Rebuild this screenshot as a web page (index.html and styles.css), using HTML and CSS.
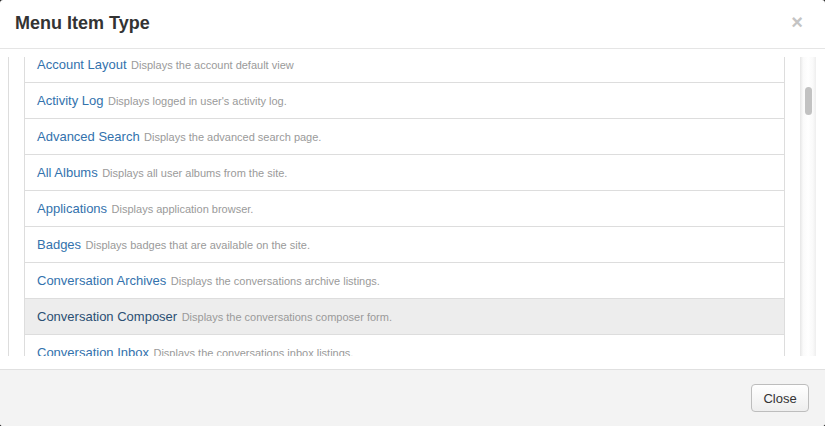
FILE: index.html
```html
<!DOCTYPE html>
<html lang="en">
<head>
  <meta charset="UTF-8">
  <title>Menu Item Type</title>
  <link rel="stylesheet" href="styles.css">
</head>
<body>
  <div class="modal">
    <div class="modal-header">
      <h3 class="modal-title">Menu Item Type</h3>
      <span class="close">&times;</span>
    </div>

    <div class="modal-body">
      <div class="scroll-box">
        <div class="scroll-content">
          <ul class="list-group">
            <li class="list-item"><a href="#">Account Layout</a> <span class="desc">Displays the account default view</span></li>
            <li class="list-item"><a href="#">Activity Log</a> <span class="desc">Displays logged in user's activity log.</span></li>
            <li class="list-item"><a href="#">Advanced Search</a> <span class="desc">Displays the advanced search page.</span></li>
            <li class="list-item"><a href="#">All Albums</a> <span class="desc">Displays all user albums from the site.</span></li>
            <li class="list-item"><a href="#">Applications</a> <span class="desc">Displays application browser.</span></li>
            <li class="list-item"><a href="#">Badges</a> <span class="desc">Displays badges that are available on the site.</span></li>
            <li class="list-item"><a href="#">Conversation Archives</a> <span class="desc">Displays the conversations archive listings.</span></li>
            <li class="list-item active"><a href="#">Conversation Composer</a> <span class="desc">Displays the conversations composer form.</span></li>
            <li class="list-item"><a href="#">Conversation Inbox</a> <span class="desc">Displays the conversations inbox listings.</span></li>
            <li class="list-item"><a href="#">Conversation Read</a> <span class="desc">Displays the conversation reading page.</span></li>
          </ul>
        </div>
        <div class="scroll-track">
          <div class="scroll-thumb"></div>
        </div>
      </div>
    </div>

    <div class="modal-footer">
      <button class="btn">Close</button>
    </div>
  </div>
</body>
</html>
```

FILE: styles.css
```css
html {
  background-color: #1a1a1a;
}

body {
  margin: 0;
  font-family: 'Liberation Sans', Arial, sans-serif;
  color: #333;
}

.modal {
  width: 825px;
  height: 426px;
  background-color: #fff;
  border-radius: 3px;
  overflow: hidden;
  display: flex;
  flex-direction: column;
}

.modal-header {
  height: 48px;
  border-bottom: 1px solid #e5e5e5;
  display: flex;
  align-items: center;
  justify-content: space-between;
  padding: 0 22px 0 15px;
}

.modal-title {
  margin: 0;
  font-size: 18px;
  font-weight: bold;
  color: #333;
  padding-bottom: 1px;
}

.close {
  font-size: 20px;
  font-weight: bold;
  color: #c4c4c4;
  line-height: 1;
  padding-bottom: 4px;
}

.modal-body {
  padding: 8px 9px 13px 8px;
}

.scroll-box {
  height: 299px;
  border-left: 1px solid #ddd;
  display: flex;
}

.scroll-content {
  flex: 1;
  overflow: hidden;
  padding: 0 15px;
}

.list-group {
  list-style: none;
  margin: -11px 0 0;
  padding: 0;
  border-top: 1px solid #ddd;
}

.list-item {
  height: 33px;
  line-height: 33px;
  padding: 0 12px 2px;
  border: 1px solid #ddd;
  border-top: none;
  white-space: nowrap;
}

.list-item a {
  font-size: 13px;
  color: #3372ad;
  text-decoration: none;
}

.list-item .desc {
  font-size: 11px;
  color: #9a9a9a;
}

.list-item.active {
  background-color: #ededed;
}

.list-item.active a {
  color: #2b4f73;
}

.scroll-track {
  width: 16px;
  background: linear-gradient(to right, #e6e6e6, #fafafa 20%, #fff 50%, #fafafa 80%, #eeeeee);
}

.scroll-thumb {
  width: 7px;
  height: 28px;
  margin: 30px 0 0 5px;
  border-radius: 4px;
  background-color: #c2c2c2;
}

.modal-footer {
  flex: 1;
  border-top: 1px solid #e0e0e0;
  background-color: #f3f3f3;
  display: flex;
  justify-content: flex-end;
  align-items: flex-start;
  padding: 14px 16px 0;
}

.btn {
  width: 58px;
  height: 28px;
  font-family: 'Liberation Sans', Arial, sans-serif;
  font-size: 13px;
  color: #333;
  border: 1px solid #bdbdbd;
  border-radius: 4px;
  background: linear-gradient(to bottom, #fff, #eeeeee);
  padding: 0;
}
```
